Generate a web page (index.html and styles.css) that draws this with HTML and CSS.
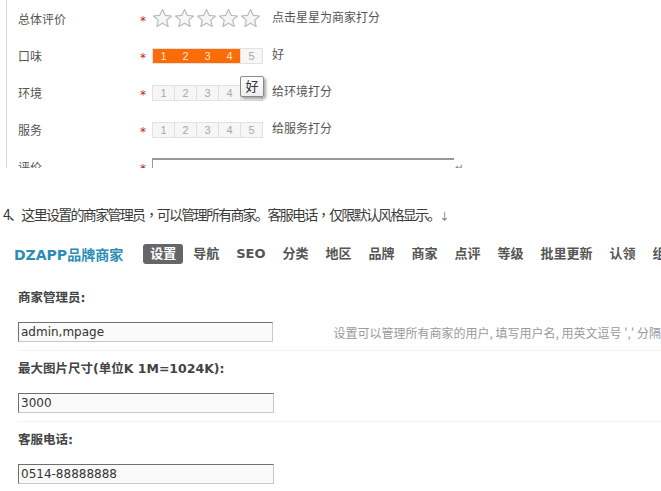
FILE: index.html
```html
<!DOCTYPE html>
<html lang="zh-CN">
<head>
<meta charset="utf-8">
<link rel="stylesheet" href="styles.css">
</head>
<body>
<div class="page">
  <div class="rate-form">
    <div class="row">
      <span class="lbl">总体评价</span><span class="req">*</span>
      <span class="stars">
        <svg class="star" viewBox="0 0 20 20"><path d="M10 1.5 L12.6 7 L18.6 7.6 L14 11.6 L15.4 17.6 L10 14.5 L4.6 17.6 L6 11.6 L1.4 7.6 L7.4 7 Z"/></svg>
        <svg class="star" viewBox="0 0 20 20"><path d="M10 1.5 L12.6 7 L18.6 7.6 L14 11.6 L15.4 17.6 L10 14.5 L4.6 17.6 L6 11.6 L1.4 7.6 L7.4 7 Z"/></svg>
        <svg class="star" viewBox="0 0 20 20"><path d="M10 1.5 L12.6 7 L18.6 7.6 L14 11.6 L15.4 17.6 L10 14.5 L4.6 17.6 L6 11.6 L1.4 7.6 L7.4 7 Z"/></svg>
        <svg class="star" viewBox="0 0 20 20"><path d="M10 1.5 L12.6 7 L18.6 7.6 L14 11.6 L15.4 17.6 L10 14.5 L4.6 17.6 L6 11.6 L1.4 7.6 L7.4 7 Z"/></svg>
        <svg class="star" viewBox="0 0 20 20"><path d="M10 1.5 L12.6 7 L18.6 7.6 L14 11.6 L15.4 17.6 L10 14.5 L4.6 17.6 L6 11.6 L1.4 7.6 L7.4 7 Z"/></svg>
      </span>
      <span class="tip tip-up">点击星星为商家打分</span>
    </div>
    <div class="row">
      <span class="lbl">口味</span><span class="req">*</span>
      <span class="scale">
        <span class="cell on">1</span><span class="cell on">2</span><span class="cell on">3</span><span class="cell on">4</span><span class="cell">5</span>
      </span>
      <span class="tip tip-up">好</span>
    </div>
    <div class="row">
      <span class="lbl">环境</span><span class="req">*</span>
      <span class="scale">
        <span class="cell">1</span><span class="cell">2</span><span class="cell">3</span><span class="cell">4</span><span class="cell">5</span>
        <span class="hover-tip">好</span>
      </span>
      <span class="tip tip-up">给环境打分</span>
    </div>
    <div class="row">
      <span class="lbl">服务</span><span class="req">*</span>
      <span class="scale">
        <span class="cell">1</span><span class="cell">2</span><span class="cell">3</span><span class="cell">4</span><span class="cell">5</span>
      </span>
      <span class="tip tip-up">给服务打分</span>
    </div>
    <div class="row">
      <span class="lbl">评价</span><span class="req">*</span>
      <span class="textarea"></span><span class="mark">↵</span>
    </div>
  </div>

  <p class="note">4、这里设置的商家管理员<span class="cm" lang="zh-TW">，</span>可以管理所有商家。客服电话<span class="cm" lang="zh-TW">，</span>仅限默认风格显示。<span class="down">↓</span></p>

  <div class="nav">
    <span class="brand">DZAPP品牌商家</span>
    <span class="item active">设置</span>
    <span class="item">导航</span>
    <span class="item">SEO</span>
    <span class="item">分类</span>
    <span class="item">地区</span>
    <span class="item">品牌</span>
    <span class="item">商家</span>
    <span class="item">点评</span>
    <span class="item">等级</span>
    <span class="item">批里更新</span>
    <span class="item">认领</span>
    <span class="item">组</span>
  </div>

  <div class="settings">
    <div class="setting">
      <div class="s-label">商家管理员:</div>
      <div class="s-row">
        <span class="input">admin,mpage</span>
        <span class="hint">设置可以管理所有商家的用户, 填写用户名, 用英文逗号 ',' 分隔</span>
      </div>
    </div>
    <div class="setting">
      <div class="s-label">最大图片尺寸(单位K 1M=1024K):</div>
      <div class="s-row">
        <span class="input">3000</span>
      </div>
    </div>
    <div class="setting">
      <div class="s-label">客服电话:</div>
      <div class="s-row">
        <span class="input">0514-88888888</span>
      </div>
    </div>
  </div>
</div>
</body>
</html>
```

FILE: styles.css
```css
html, body {
  margin: 0;
  padding: 0;
  background: #ffffff;
}
body {
  width: 661px;
  height: 491px;
  overflow: hidden;
  font-family: "Noto Sans CJK SC", sans-serif;
}
.page {
  display: flex;
  flex-direction: column;
  white-space: nowrap;
}

/* top rating form */
.rate-form {
  margin-left: 6px;
  border-left: 1px solid #d8d8d8;
  padding-left: 11px;
  height: 168px;
  overflow: hidden;
  display: flex;
  flex-direction: column;
  font-size: 12px;
  color: #555;
}
.rate-form .row {
  height: 37px;
  flex: none;
  display: flex;
  align-items: center;
}
.lbl {
  width: 122px;
  flex: none;
}
.req {
  width: 12px;
  flex: none;
  color: #c4181c;
  font-family: "DejaVu Sans", sans-serif;
  font-size: 12px;
  position: relative;
  top: 2px;
}
.stars {
  display: flex;
  width: 111px;
}
.star {
  width: 21px;
  height: 21px;
  margin-right: 1px;
  fill: #f6f6f6;
  stroke: #b9b9b9;
  stroke-width: 1.1;
  stroke-linejoin: round;
}
.tip {
  margin-left: 9px;
}
.tip-up {
  position: relative;
  top: -2px;
}
.scale {
  position: relative;
  display: flex;
  width: 111px;
  height: 16px;
  box-sizing: border-box;
  border: 1px solid #e2e2e2;
  background: #f6f6f6;
}
.cell {
  flex: 1;
  text-align: center;
  line-height: 14px;
  font-family: "Liberation Sans", sans-serif;
  font-size: 11px;
  color: #a8a8a8;
  border-left: 1px solid #dedede;
}
.cell:first-child {
  border-left: none;
}
.cell.on {
  background: #fb6b06;
  color: #ffe7cf;
  border-left-color: #fb6b06;
}
.hover-tip {
  position: absolute;
  left: 87px;
  top: -10px;
  width: 24px;
  height: 21px;
  box-sizing: border-box;
  border: 1px solid #8a8a8a;
  border-radius: 2px;
  background: linear-gradient(#ffffff, #eeeeee);
  box-shadow: 2px 2px 3px rgba(0, 0, 0, 0.35);
  font-size: 13px;
  color: #333;
  text-align: center;
  line-height: 18px;
}
.textarea {
  align-self: flex-start;
  margin-top: 10px;
  width: 301px;
  height: 40px;
  border-top: 2px solid #999;
  border-left: 1px solid #999;
}
.mark {
  align-self: flex-start;
  margin-top: 11px;
  margin-left: 1px;
  font-size: 10px;
  color: #777;
}

/* note paragraph */
.note {
  margin: 36px 0 0 3px;
  height: 20px;
  line-height: 20px;
  font-size: 14px;
  letter-spacing: -1.7px;
  color: #3a3a3a;
}
.cm {
  font-family: "Noto Sans CJK TC", sans-serif;
}
.down {
  font-size: 10px;
  color: #666;
  letter-spacing: 0;
}

/* nav */
.nav {
  margin-top: 20px;
  display: flex;
  align-items: center;
  height: 20px;
  padding-left: 14px;
  font-weight: 700;
}
.brand {
  font-family: "DejaVu Sans", "Noto Sans CJK SC", sans-serif;
  font-size: 14px;
  color: #2b8cb6;
  margin-right: 20px;
}
.item {
  font-family: "DejaVu Sans", "Noto Sans CJK SC", sans-serif;
  font-size: 13px;
  color: #555;
  padding: 0 7px;
  margin-right: 3px;
  line-height: 20px;
  border-radius: 3px;
}
.item.active {
  background: #666;
  color: #fff;
}

/* settings */
.settings {
  margin-top: 24px;
  display: flex;
  flex-direction: column;
}
.setting {
  padding-left: 18px;
  margin-bottom: 8px;
}
.s-label {
  height: 20px;
  line-height: 20px;
  font-family: "DejaVu Sans", "Noto Sans CJK SC", sans-serif;
  font-weight: 700;
  font-size: 12.5px;
  color: #444;
  margin-bottom: 14px;
}
.s-row {
  display: flex;
  align-items: center;
  padding-bottom: 8px;
  border-bottom: 1px solid #f3f3f3;
}
.input {
  width: 256px;
  height: 20px;
  box-sizing: border-box;
  border-top: 1px solid #707070;
  border-left: 1px solid #707070;
  border-right: 1px solid #c8c8c8;
  border-bottom: 1px solid #c8c8c8;
  background: #fafafa;
  padding-left: 2px;
  font-family: "DejaVu Sans", sans-serif;
  font-size: 12px;
  line-height: 18px;
  color: #333;
}
.hint {
  margin-left: 61px;
  font-size: 12px;
  color: #999;
}
```
